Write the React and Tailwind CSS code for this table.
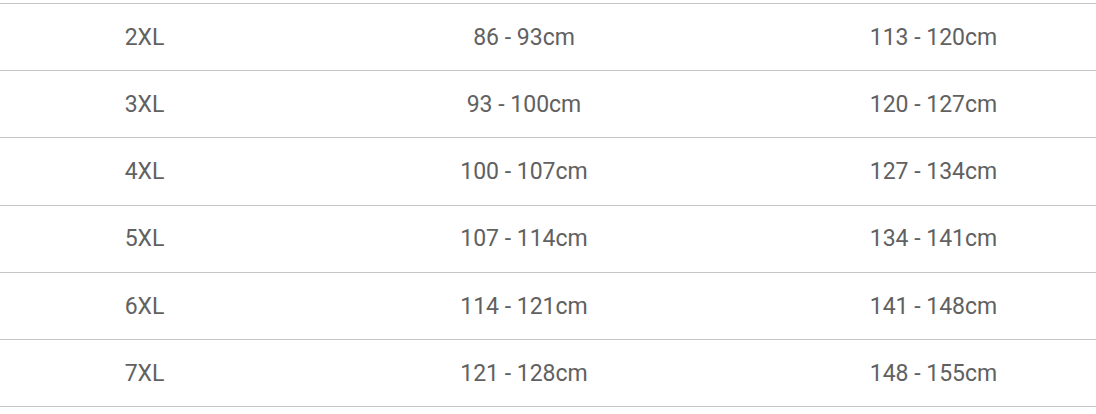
import React from "react";

const rows = [
  ["2XL", "86 - 93cm", "113 - 120cm"],
  ["3XL", "93 - 100cm", "120 - 127cm"],
  ["4XL", "100 - 107cm", "127 - 134cm"],
  ["5XL", "107 - 114cm", "134 - 141cm"],
  ["6XL", "114 - 121cm", "141 - 148cm"],
  ["7XL", "121 - 128cm", "148 - 155cm"],
];

const App = () => {
  return (
    <div
      className="w-[1096px] h-[414px] bg-white overflow-hidden pt-[3px]"
      style={{ fontFamily: "Roboto, 'Liberation Sans', sans-serif" }}
    >
      <div className="w-[1108px] border-t border-[#c4c4c4]">
        {rows.map((r) => (
          <div
            key={r[0]}
            className="grid grid-cols-[289px_470px_349px] h-[67.2px] pt-[2px] items-center border-b border-[#c4c4c4] text-[23px] text-[#616161] text-center"
          >
            <div>{r[0]}</div>
            <div>{r[1]}</div>
            <div>{r[2]}</div>
          </div>
        ))}
      </div>
    </div>
  );
};

export default App;
